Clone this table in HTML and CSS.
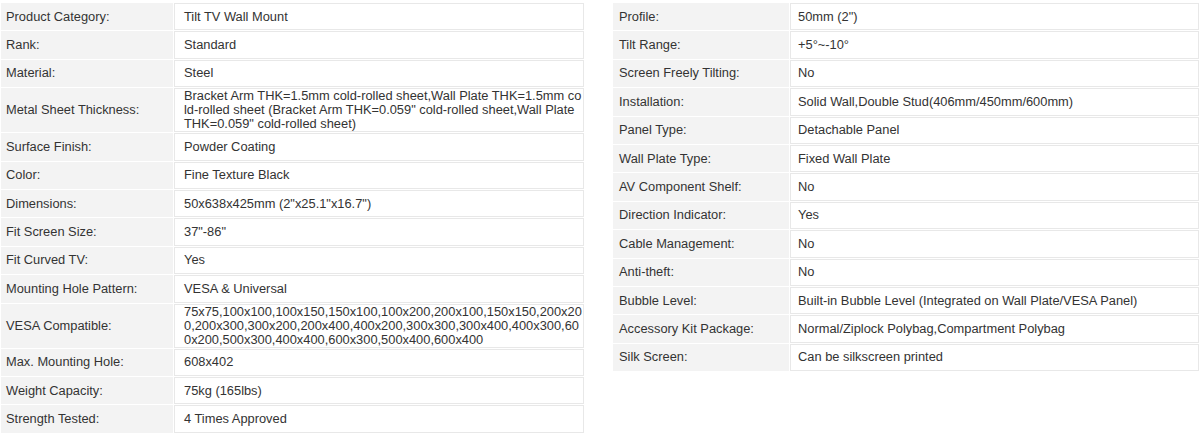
FILE: index.html
```html
<!DOCTYPE html>
<html>
<head>
<meta charset="utf-8">
<link rel="stylesheet" href="styles.css">
</head>
<body>
<div class="wrap">
  <table class="spec spec-left">
    <tr><td class="lab">Product Category:</td><td class="val">Tilt TV Wall Mount</td></tr>
    <tr><td class="lab">Rank:</td><td class="val">Standard</td></tr>
    <tr><td class="lab">Material:</td><td class="val">Steel</td></tr>
    <tr><td class="lab">Metal Sheet Thickness:</td><td class="val">Bracket Arm THK=1.5mm cold-rolled sheet,Wall Plate THK=1.5mm cold-rolled sheet (Bracket Arm THK=0.059" cold-rolled sheet,Wall Plate THK=0.059" cold-rolled sheet)</td></tr>
    <tr><td class="lab">Surface Finish:</td><td class="val">Powder Coating</td></tr>
    <tr><td class="lab">Color:</td><td class="val">Fine Texture Black</td></tr>
    <tr><td class="lab">Dimensions:</td><td class="val">50x638x425mm (2"x25.1"x16.7")</td></tr>
    <tr><td class="lab">Fit Screen Size:</td><td class="val">37"-86"</td></tr>
    <tr><td class="lab">Fit Curved TV:</td><td class="val">Yes</td></tr>
    <tr><td class="lab">Mounting Hole Pattern:</td><td class="val">VESA &amp; Universal</td></tr>
    <tr><td class="lab">VESA Compatible:</td><td class="val">75x75,100x100,100x150,150x100,100x200,200x100,150x150,200x200,200x300,300x200,200x400,400x200,300x300,300x400,400x300,600x200,500x300,400x400,600x300,500x400,600x400</td></tr>
    <tr><td class="lab">Max. Mounting Hole:</td><td class="val">608x402</td></tr>
    <tr><td class="lab">Weight Capacity:</td><td class="val">75kg (165lbs)</td></tr>
    <tr><td class="lab">Strength Tested:</td><td class="val">4 Times Approved</td></tr>
  </table>
  <table class="spec spec-right">
    <tr><td class="lab">Profile:</td><td class="val">50mm (2")</td></tr>
    <tr><td class="lab">Tilt Range:</td><td class="val">+5°~-10°</td></tr>
    <tr><td class="lab">Screen Freely Tilting:</td><td class="val">No</td></tr>
    <tr><td class="lab">Installation:</td><td class="val">Solid Wall,Double Stud(406mm/450mm/600mm)</td></tr>
    <tr><td class="lab">Panel Type:</td><td class="val">Detachable Panel</td></tr>
    <tr><td class="lab">Wall Plate Type:</td><td class="val">Fixed Wall Plate</td></tr>
    <tr><td class="lab">AV Component Shelf:</td><td class="val">No</td></tr>
    <tr><td class="lab">Direction Indicator:</td><td class="val">Yes</td></tr>
    <tr><td class="lab">Cable Management:</td><td class="val">No</td></tr>
    <tr><td class="lab">Anti-theft:</td><td class="val">No</td></tr>
    <tr><td class="lab">Bubble Level:</td><td class="val">Built-in Bubble Level (Integrated on Wall Plate/VESA Panel)</td></tr>
    <tr><td class="lab">Accessory Kit Package:</td><td class="val">Normal/Ziplock Polybag,Compartment Polybag</td></tr>
    <tr><td class="lab">Silk Screen:</td><td class="val">Can be silkscreen printed</td></tr>
  </table>
</div>
</body>
</html>
```
FILE: styles.css
```css
html, body {
  margin: 0;
  padding: 0;
  background: #ffffff;
}
body {
  font-family: "Liberation Sans", Arial, sans-serif;
  font-size: 12.85px;
  color: #333333;
}
.wrap {
  display: flex;
  align-items: flex-start;
  gap: 27px;
  padding-top: 2px;
}
.spec {
  border-collapse: separate;
  border-spacing: 1px;
  table-layout: fixed;
  background: #ffffff;
}
.spec-left { width: 585px; }
.spec-right { width: 588px; }
.spec td {
  box-sizing: border-box;
  height: 27.4px;
  line-height: 14px;
  vertical-align: middle;
  padding: 0 4px;
}
.spec .lab {
  background: #f3f3f3;
  border: 1px solid #f3f3f3;
}
.spec-left .lab { width: 172px; }
.spec-right .lab { width: 176px; padding-left: 5px; }
.spec .val {
  background: #ffffff;
  border: 1px solid #e8e8e8;
  padding-left: 9px;
  padding-right: 0;
  word-break: break-all;
}
.spec-right .val { padding-left: 7px; }
```
